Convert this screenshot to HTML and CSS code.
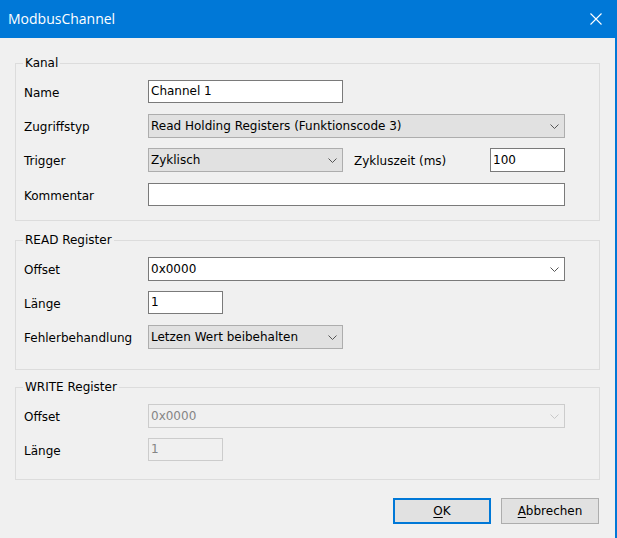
FILE: index.html
```html
<!DOCTYPE html>
<html lang="de">
<head>
<meta charset="utf-8">
<title>ModbusChannel</title>
<link rel="stylesheet" href="styles.css">
</head>
<body>
<div class="window">
  <header class="titlebar">
    <span class="title">ModbusChannel</span>
    <svg class="close" width="12" height="12" viewBox="0 0 12 12"><path d="M0.5 0.5 L11.5 11.5 M11.5 0.5 L0.5 11.5" stroke="#ffffff" stroke-width="1.1" fill="none"/></svg>
  </header>
  <main class="content">
    <fieldset class="group g-kanal">
      <legend>Kanal</legend>
      <div class="form">
        <div class="lbl">Name</div>
        <div class="field w-195">Channel 1</div>

        <div class="lbl">Zugriffstyp</div>
        <div class="combo w-full"><span>Read Holding Registers (Funktionscode 3)</span><svg class="chev" width="9" height="5" viewBox="0 0 9 5"><polyline points="0.5,0.5 4.5,4.5 8.5,0.5" fill="none" stroke="#555" stroke-width="1"/></svg></div>

        <div class="lbl">Trigger</div>
        <div class="trigger">
          <div class="combo w-195"><span>Zyklisch</span><svg class="chev" width="9" height="5" viewBox="0 0 9 5"><polyline points="0.5,0.5 4.5,4.5 8.5,0.5" fill="none" stroke="#555" stroke-width="1"/></svg></div>
          <div class="trigger-lbl">Zykluszeit (ms)</div>
          <div class="field tall w-zyk">100</div>
        </div>

        <div class="lbl lbl-last">Kommentar</div>
        <div class="field w-full row-last"></div>
      </div>
    </fieldset>

    <fieldset class="group g-read">
      <legend>READ Register</legend>
      <div class="form">
        <div class="lbl">Offset</div>
        <div class="combo edit w-full"><span>0x0000</span><svg class="chev" width="9" height="5" viewBox="0 0 9 5"><polyline points="0.5,0.5 4.5,4.5 8.5,0.5" fill="none" stroke="#555" stroke-width="1"/></svg></div>

        <div class="lbl">Länge</div>
        <div class="field w-75">1</div>

        <div class="lbl">Fehlerbehandlung</div>
        <div class="combo w-195"><span>Letzen Wert beibehalten</span><svg class="chev" width="9" height="5" viewBox="0 0 9 5"><polyline points="0.5,0.5 4.5,4.5 8.5,0.5" fill="none" stroke="#555" stroke-width="1"/></svg></div>
      </div>
    </fieldset>

    <fieldset class="group g-write">
      <legend>WRITE Register</legend>
      <div class="form">
        <div class="lbl">Offset</div>
        <div class="combo edit disabled w-full"><span>0x0000</span><svg class="chev" width="9" height="5" viewBox="0 0 9 5"><polyline points="0.5,0.5 4.5,4.5 8.5,0.5" fill="none" stroke="#c8c8c8" stroke-width="1"/></svg></div>

        <div class="lbl">Länge</div>
        <div class="field disabled w-75">1</div>
      </div>
    </fieldset>

    <div class="buttons">
      <button class="btn default" type="button"><u>O</u>K</button>
      <button class="btn" type="button"><u>A</u>bbrechen</button>
    </div>
  </main>
</div>
</body>
</html>
```

FILE: styles.css
```css
* {
  box-sizing: border-box;
}

html,
body {
  margin: 0;
  padding: 0;
}

body {
  width: 617px;
  height: 538px;
  overflow: hidden;
  background: #f0f0f0;
  font-family: "DejaVu Sans", Verdana, sans-serif;
  font-size: 12px;
  color: #000;
}

.window {
  width: 617px;
  height: 538px;
  border-right: 2px solid #0078d7;
  display: flex;
  flex-direction: column;
}

.titlebar {
  height: 38px;
  flex: none;
  background: #0078d7;
  color: #fff;
  display: flex;
  align-items: center;
  justify-content: space-between;
  padding: 0 13px 0 8px;
}

.title {
  font-family: "Open Sans", "Noto Sans", sans-serif;
  font-size: 14px;
  line-height: 20px;
}

.close {
  display: block;
}

.content {
  padding: 18px 15px 0 15px;
  display: flex;
  flex-direction: column;
}

.group {
  margin: 0;
  min-width: 0;
  border: 1px solid #dcdcdc;
  padding: 9px 34px 16px 7px;
}

.group legend {
  padding: 0 2px;
  font-size: 12px;
  line-height: 15px;
}

.g-kanal {
  padding-bottom: 15px;
}

.g-read {
  margin-top: 12px;
  padding-bottom: 21px;
}

.g-write {
  margin-top: 10px;
  padding-bottom: 18px;
}

.form {
  display: grid;
  grid-template-columns: 125px 1fr;
  grid-auto-rows: 23px;
  row-gap: 11px;
  align-items: start;
}

.lbl {
  padding: 2px 0 0 1px;
  line-height: 23px;
  white-space: nowrap;
}

.row-last,
.lbl-last {
  margin-top: 1px;
}

.field {
  height: 23px;
  border: 1px solid #7a7a7a;
  background: #fff;
  padding: 0 2px;
  line-height: 21px;
  white-space: nowrap;
}

.field.tall {
  height: 24px;
  line-height: 22px;
}

.combo {
  height: 24px;
  border: 1px solid #adadad;
  background: #e1e1e1;
  display: flex;
  align-items: center;
  justify-content: space-between;
  padding: 0 5px 0 2px;
  white-space: nowrap;
}

.combo.edit {
  background: #fff;
  border-color: #7a7a7a;
}

.combo .chev {
  display: block;
  flex: none;
}

.field.disabled,
.combo.disabled {
  background: #f0f0f0;
  border-color: #cccccc;
  color: #858585;
}

.w-195 {
  width: 195px;
}

.w-75 {
  width: 75px;
}

.w-zyk {
  width: 75px;
}

.w-full {
  width: 100%;
}

.trigger {
  display: flex;
  align-items: flex-start;
}

.trigger-lbl {
  margin-left: 11px;
  padding-top: 1px;
  line-height: 24px;
  white-space: nowrap;
}

.trigger .w-zyk {
  margin-left: auto;
}

.buttons {
  display: flex;
  justify-content: flex-end;
  gap: 10px;
  margin-top: 18px;
  padding-right: 1px;
}

.btn {
  width: 98px;
  height: 26px;
  margin: 0;
  padding: 0;
  background: #e1e1e1;
  border: 1px solid #adadad;
  border-radius: 0;
  font-family: inherit;
  font-size: 12px;
  color: #000;
  display: flex;
  align-items: center;
  justify-content: center;
}

.btn.default {
  border: 2px solid #0078d7;
}

.btn u {
  text-decoration: underline;
  text-underline-offset: 2px;
}
```
